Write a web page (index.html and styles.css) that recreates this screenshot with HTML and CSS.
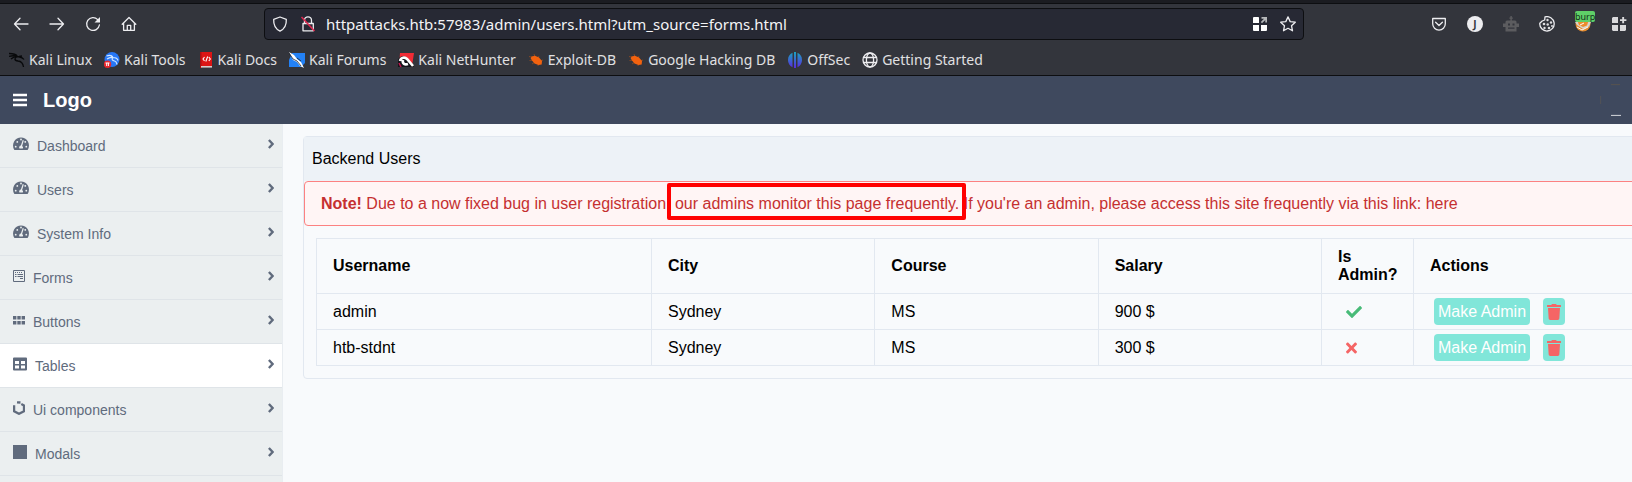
FILE: index.html
```html
<!DOCTYPE html>
<html lang="en">
<head>
<meta charset="utf-8">
<title>Backend Users</title>
<link rel="stylesheet" href="styles.css">
</head>
<body>
<svg class="sprite" aria-hidden="true">
  <symbol id="gauge" viewBox="0 0 16 14">
    <path fill="currentColor" fill-rule="evenodd" d="M8 .5a8 8 0 0 0-6.900 12c.2.4.5.5.8.5h12.200c.3 0 .6-.1.8-.5A8 8 0 0 0 8 .5zM8 1.600a.9.9 0 1 1 0 1.800.9.9 0 0 1 0-1.800zM2.700 10.600a.9.9 0 1 1 0-1.800.9.9 0 0 1 0 1.800zM4.300 5.800a.9.9 0 1 1 0-1.800.9.9 0 0 1 0 1.800zM9.700 11.600H6.500a1.900 1.900 0 0 1 1.400-3L9.700 3.100l1.100.4-1.700 5.500a1.900 1.900 0 0 1 .6 2.600zM11.900 5.700a.9.9 0 0 1 .1-1.700.9.9 0 1 1-.1 1.700zM13.300 10.600a.9.9 0 1 1 0-1.800.9.9 0 0 1 0 1.800z"/>
  </symbol>
  <symbol id="chevron" viewBox="0 0 6 10">
    <path fill="none" stroke="currentColor" stroke-width="2.400" d="M.9 1 4.600 5 .9 9"/>
  </symbol>
  <symbol id="trash" viewBox="0 0 448 512">
    <path fill="currentColor" d="M432 32H312l-9.400-18.700A24 24 0 0 0 281.100 0H166.800a23.720 23.720 0 0 0-21.400 13.300L136 32H16A16 16 0 0 0 0 48v32a16 16 0 0 0 16 16h416a16 16 0 0 0 16-16V48a16 16 0 0 0-16-16zM53.200 467a48 48 0 0 0 47.900 45h245.800a48 48 0 0 0 47.900-45L416 128H32z"/>
  </symbol>
  <symbol id="bug" viewBox="0 0 16 16">
    <path fill="none" stroke="#8a4a24" stroke-width=".9" d="M1 4.500l4 1M1.500 8.500l4-.5M4 12l3-2M6 2l1 3M11 4l-1 2M15 8l-3 1M10 14l.5-3"/>
    <path fill="#f2620f" d="M3.500 4.500 7 3.800l4 1.800 3 3.400-.3 3.500-3.200.5-4-1.500L4 8.500 2.800 6.500z"/>
  </symbol>
</svg>

<div class="browser">
  <div class="tabstrip"></div>
  <div class="toolbar">
    <button class="tool" aria-label="Back"><svg viewBox="0 0 16 16"><path class="line" d="M15 8H1.500M7 2.300 1.500 8 7 13.700"/></svg></button>
    <button class="tool" aria-label="Forward"><svg viewBox="0 0 16 16"><path class="line" d="M1 8h13.500M9 2.300 14.500 8 9 13.700"/></svg></button>
    <button class="tool" aria-label="Reload"><svg viewBox="0 0 16 16"><path class="line" d="M12.700 3.600A6.400 6.400 0 1 0 14.400 9"/><path class="solid" d="M15 1v5.500H9.500z"/></svg></button>
    <button class="tool" aria-label="Home"><svg viewBox="0 0 16 16"><path class="line" d="M1.200 8.200 8 1.500l6.800 6.700M2.600 7v7.300h10.800V7M6.300 14V9.300h3.400V14"/></svg></button>
    <div class="spring"></div>
    <div class="urlbar">
      <svg class="icon16" viewBox="0 0 16 16"><path class="line" d="M8 1 14.300 3.400c.3 5.400-1.700 9.600-6.300 11.700C3.400 13 1.400 8.800 1.700 3.400z"/></svg>
      <svg class="icon16 lock" viewBox="0 0 16 16"><path class="line" d="M4.500 7.500V4.300a3.500 3.500 0 0 1 7 0v3.200M3 7.500h10.300v7.300H3z"/><path stroke="#e22850" stroke-width="1.500" d="M1.500 1 14.500 15"/></svg>
      <input class="url" type="text" aria-label="Address" value="httpattacks.htb:57983/admin/users.html?utm_source=forms.html">
      <button class="tool" aria-label="Containers"><svg viewBox="0 0 16 16"><path fill="#fff" d="M2 1h4.500a1 1 0 0 1 .5 1v5H1V2a1 1 0 0 1 1-1zM1 9h6v6H2a1 1 0 0 1-1-1zM9 9h6v5a1 1 0 0 1-1 1H9z"/><path fill="#b5b7b9" d="M9.500 1H15v5.500h-1.700V4L10 7.200 8.800 6 12 2.700H9.500z"/></svg></button>
      <button class="tool star" aria-label="Bookmark"><svg viewBox="0 0 16 16"><path class="line" d="M8 .9l2.200 4.700 5.100.6-3.800 3.500 1 5.100L8 12.300l-4.500 2.500 1-5.100L.7 6.200l5.100-.6z"/></svg></button>
    </div>
    <div class="spring"></div>
    <button class="tool" aria-label="Pocket"><svg viewBox="0 0 16 16"><path class="line" d="M1.700 2.500h12.600v5.300a6.300 6.300 0 0 1-12.600 0zM4.600 6.200 8 9.500l3.400-3.300"/></svg></button>
    <button class="tool" aria-label="Account"><svg viewBox="0 0 16 16"><circle class="solid" cx="8" cy="8" r="8"/><text class="letter" x="8" y="12">J</text></svg></button>
    <button class="tool" aria-label="Robot"><svg viewBox="0 0 16 16"><path fill="#5c5c5f" fill-rule="evenodd" d="M7.400 0h1.400v1.500h1v1.200h-1V4.500H12a1.500 1.500 0 0 1 1.500 1.500v1.500H16v3.500h-2.500v4.500h-11V11H0V7.500h2.500V6A1.500 1.500 0 0 1 4 4.500h3.400V2.700h-1V1.500h1zM5 7.500v2h2v-2zm4.500 0v2h2v-2zM5 11.500v1.200h6.500v-1.200z"/></svg></button>
    <button class="tool" aria-label="Cookies"><svg viewBox="0 0 16 16"><path class="line" d="M6 .9 5.700 4 3.200 5 .8 7.200A7.200 7.200 0 1 0 6 .9z"/><g fill="#dedee0"><circle cx="8.500" cy="4" r="1.200"/><circle cx="12" cy="6.500" r="1.200"/><circle cx="5" cy="8" r="1.300"/><circle cx="8.700" cy="8.500" r="1.200"/><circle cx="5.500" cy="12" r="1.200"/><circle cx="10" cy="12" r="1.300"/><circle cx="13" cy="10" r="1"/></g></svg></button>
    <button class="tool" aria-label="Proxy"><svg viewBox="0 0 16 16"><circle cx="8" cy="8" r="7.500" fill="#e58a2c"/><path fill="#d8d3cb" d="M0 6h16l-2 4.500L8 13 2 9z"/><path fill="#ee8b2b" d="M2.500 5h11L12 9.500 8 11 4 9z"/><path stroke="#fff" d="M5 9l4-2M2 11l5 3 6-3" fill="none"/></svg><span class="badge">burp</span></button>
    <button class="tool" aria-label="Extensions"><svg viewBox="0 0 16 16"><path fill="#dadadc" d="M2 1h5v6H1V2zM1 9h6v6H2l-1-1zM9 9h6v5l-1 1H9zM11.200 1h1.900v2.200h2.300V5h-2.300v2.200h-1.900V5H9V3.200h2.200z"/></svg></button>
  </div>
  <nav class="bookmarks" aria-label="Bookmarks">
    <a href="#"><svg class="icon16" viewBox="0 0 16 16"><path fill="none" stroke="#08090b" stroke-width="1.300" d="M0 1.500c4 0 7 .5 8.500 3M0 4.500c3-1 6-1 8.500 0M2 7c2-2 5-2.500 6.500-2.500 2 .5 5 .5 6.500 3M8.500 4.500C5 6 5 8.500 9 9c3 .3 5 2 5.500 6M10 4.500l3-.5"/></svg>Kali Linux</a>
    <a href="#"><svg class="icon16" viewBox="0 0 16 16"><circle cx="8" cy="7.500" r="7.500" fill="#2777f5"/><path fill="none" stroke="#cfe5ff" stroke-width="1.200" d="M2.500 4c3-1 5.500-.5 6.500 1.500 3 0 4.500.8 5 3M3 7c2-1.500 4-2 6-1.500-2 1.500-.5 3 1.500 3.500s2 1.500 2.500 3.500"/><circle cx="3.500" cy="12.200" r="3.700" fill="#e8262c"/><path stroke="#fff" d="M1.500 11h4M2.700 11v3M4.400 11v3"/></svg>Kali Tools</a>
    <a href="#"><svg class="icon16" viewBox="0 0 16 16"><path fill="#a90f12" d="M2 0h2v16H2z"/><path fill="#dc1414" d="M3.500 0H14v14H3.500z"/><path fill="#d7c9c9" d="M3 14h11v1.600H3z"/><path fill="none" stroke="#fff" stroke-width="1.100" d="M6.500 5 5 7l1.500 2M9.700 4.500 7.800 9.500M10.800 5l1.500 2-1.500 2"/></svg>Kali Docs</a>
    <a href="#"><svg class="icon16" viewBox="0 0 16 16"><path fill="#2381f5" d="M3 1h13v10l-4 4H0V8z"/><path fill="#fff" d="M0 0l5 3 3 4 4 3 3 6-4-2-3-4-4-2-2-4z"/><path stroke="#20232a" stroke-width=".8" fill="none" d="M0 1l4 6 4 2 4 5M8 6l4 3"/></svg>Kali Forums</a>
    <a href="#"><svg class="icon16" viewBox="0 0 16 16"><path fill="#f22b35" d="M2 1h14l-2 13-5-3-8 4z"/><path fill="#15151a" d="M0 8c1-4 6-5 9-2l7 9H0z"/><path fill="none" stroke="#fff" stroke-width="2.600" d="M2 9c1-4 5-4 7-2l6 7M5 8c-1 4 2 5 5 4"/><path stroke="#c5164e" stroke-width="1.600" d="M1 11l2 4"/></svg>Kali NetHunter</a>
    <a href="#"><svg class="icon16"><use href="#bug"/></svg>Exploit-DB</a>
    <a href="#"><svg class="icon16"><use href="#bug"/></svg>Google Hacking DB</a>
    <a href="#"><svg class="icon16" viewBox="0 0 16 16"><defs><linearGradient id="offsec" gradientUnits="userSpaceOnUse" x1="0" y1="0" x2="0" y2="16"><stop stop-color="#1aa3bd"/><stop offset="1" stop-color="#5a2be0"/></linearGradient></defs><path fill="url(#offsec)" d="M5.500.8v14.400A8 8 0 0 1 5.500.8zM10.500.8v14.400a8 8 0 0 0 0-14.400zM7 0h2v16H7z"/></svg>OffSec</a>
    <a href="#"><svg class="icon16" viewBox="0 0 16 16"><g class="line"><circle cx="8" cy="8" r="7"/><ellipse cx="8" cy="8" rx="3.600" ry="7"/><path d="M1.500 5.500h13M1.500 10.500h13"/></g></svg>Getting Started</a>
  </nav>
</div>

<header class="header">
  <button class="menu" aria-label="Toggle menu"><svg viewBox="0 0 14 14"><path stroke="#fff" stroke-width="2.400" d="M0 2h14M0 7h14M0 12h14"/></svg></button>
  <h1 class="logo">Logo</h1>
  <svg class="avatar" viewBox="0 0 32 32"><path d="M11 .6h9" stroke="#57524f"/><path d="M.6 12v8" stroke="#525256"/><path d="M11 31.400h10" stroke="#d5d8dc"/></svg>
</header>

<div class="page">
  <nav class="sidebar" aria-label="Main">
    <ul>
      <li><a href="#"><svg class="w16"><use href="#gauge"/></svg><span>Dashboard</span><svg class="chev"><use href="#chevron"/></svg></a></li>
      <li><a href="#"><svg class="w16"><use href="#gauge"/></svg><span>Users</span><svg class="chev"><use href="#chevron"/></svg></a></li>
      <li><a href="#"><svg class="w16"><use href="#gauge"/></svg><span>System Info</span><svg class="chev"><use href="#chevron"/></svg></a></li>
      <li><a href="#"><svg class="w12" viewBox="0 0 12 14"><path fill="none" stroke="currentColor" d="M.5 1.500h11v11H.5zM2 3.500h1M4 3.500h1M6 3.500h1M8 3.500h1M2 5.500h1.500M4.500 5.500H10M2 7.500h1.500M4.500 7.500H10M7 9.500h3"/></svg><span>Forms</span><svg class="chev"><use href="#chevron"/></svg></a></li>
      <li><a href="#"><svg class="w12" viewBox="0 0 12 14"><path fill="currentColor" d="M0 3h3.400v3.500H0zM4.300 3h3.400v3.500H4.300zM8.600 3H12v3.500H8.600zM0 8h3.400v3.500H0zM4.300 8h3.400v3.500H4.300zM8.600 8H12v3.500H8.600z"/></svg><span>Buttons</span><svg class="chev"><use href="#chevron"/></svg></a></li>
      <li class="active"><a href="#"><svg class="w14" viewBox="0 0 14 14"><path fill="currentColor" fill-rule="evenodd" d="M1 .5h12a1 1 0 0 1 1 1v11a1 1 0 0 1-1 1H1a1 1 0 0 1-1-1v-11a1 1 0 0 1 1-1zM2 4v3h4V4zm6 0v3h4V4zM2 8.500v3h4v-3zm6 0v3h4v-3z"/></svg><span>Tables</span><svg class="chev"><use href="#chevron"/></svg></a></li>
      <li><a href="#"><svg class="w12" viewBox="0 0 12 14"><path fill="none" stroke="currentColor" stroke-width="2.300" d="M1.100 4.200v6L6 12.800l5-2.600V4.500L8.300 3M4 1.300 7.500 1.500"/></svg><span>Ui components</span><svg class="chev"><use href="#chevron"/></svg></a></li>
      <li><a href="#"><svg class="w14" viewBox="0 0 14 14"><path fill="currentColor" d="M0 0h14v14H0z"/></svg><span>Modals</span><svg class="chev"><use href="#chevron"/></svg></a></li>
    </ul>
  </nav>

  <main class="main">
    <section class="panel">
      <h2 class="panel-title">Backend Users</h2>
      <div class="alert" role="alert"><strong>Note!</strong> Due to a now fixed bug in user registration, <mark class="callout">our admins monitor this page frequently.</mark> If you're an admin, please access this site frequently via this link: <a href="#">here</a></div>
      <div class="table-wrap">
        <table>
          <thead>
            <tr><th class="c-name">Username</th><th class="c-mid">City</th><th class="c-mid">Course</th><th class="c-mid">Salary</th><th class="c-flag">Is Admin?</th><th>Actions</th></tr>
          </thead>
          <tbody>
            <tr><td>admin</td><td>Sydney</td><td>MS</td><td>900 $</td>
              <td><svg class="yes" role="img" aria-label="Yes" viewBox="0 0 512 512"><path fill="currentColor" d="M173.898 439.404l-166.400-166.400c-9.997-9.997-9.997-26.206 0-36.204l36.203-36.204c9.997-9.998 26.207-9.998 36.204 0L192 312.690 432.095 72.596c9.997-9.997 26.207-9.997 36.204 0l36.203 36.204c9.997 9.997 9.997 26.206 0 36.204l-294.400 294.401c-9.998 9.997-26.207 9.997-36.204-.001z"/></svg></td>
              <td><div class="actions"><button class="btn">Make Admin</button><button class="btn danger" aria-label="Delete admin"><svg><use href="#trash"/></svg></button></div></td></tr>
            <tr><td>htb-stdnt</td><td>Sydney</td><td>MS</td><td>300 $</td>
              <td><svg class="no" role="img" aria-label="No" viewBox="0 0 352 512"><path fill="currentColor" d="M242.720 256l100.070-100.070c12.280-12.280 12.280-32.190 0-44.480l-22.240-22.240c-12.280-12.280-32.190-12.280-44.480 0L176 189.280 75.930 89.210c-12.280-12.280-32.190-12.280-44.480 0L9.210 111.450c-12.280 12.280-12.280 32.190 0 44.480L109.280 256 9.210 356.070c-12.280 12.280-12.280 32.190 0 44.480l22.240 22.240c12.280 12.280 32.200 12.280 44.480 0L176 322.720l100.070 100.070c12.280 12.280 32.200 12.280 44.480 0l22.240-22.240c12.280-12.280 12.280-32.190 0-44.480L242.720 256z"/></svg></td>
              <td><div class="actions"><button class="btn">Make Admin</button><button class="btn danger" aria-label="Delete htb-stdnt"><svg><use href="#trash"/></svg></button></div></td></tr>
          </tbody>
        </table>
      </div>
    </section>
  </main>
</div>
</body>
</html>
```

FILE: styles.css
```css
* { box-sizing: border-box; }

body {
  margin: 0;
  min-height: 100vh;
  display: flex;
  flex-direction: column;
  overflow: hidden;
  background: #f8fafc;
  color: #000;
  font: 16px/18px "Liberation Sans", Arial, sans-serif;
}

a { color: inherit; text-decoration: none; }
button { border: 0; padding: 0; background: none; color: inherit; font: inherit; }
svg { display: block; flex: none; }
.sprite { position: absolute; width: 0; height: 0; }

.line { fill: none; stroke: #ededf0; stroke-width: 1.3; stroke-linejoin: round; stroke-linecap: round; }
.solid { fill: #ededf0; }
.icon16 { width: 16px; height: 16px; }

/* Browser chrome */
.browser {
  background: #33353c;
  color: #e0e0e2;
  border-bottom: 1px solid #0d0e11;
  font-family: "Noto Sans", sans-serif;
}
.tabstrip { height: 4px; background: #1b1c21; border-bottom: 1px solid #0d0e11; }
.toolbar { display: flex; align-items: center; gap: 20px; padding: 4px 5px 4px 13px; }
.tool { width: 16px; height: 16px; flex: none; position: relative; }
.tool svg { width: 16px; height: 16px; }
.spring { flex: 0 1 87px; }
.urlbar {
  flex: 1;
  display: flex;
  align-items: center;
  height: 32px;
  padding: 0 7px;
  background: #272934;
  border: 1px solid #0d0e11;
  border-radius: 4px;
}
.lock { margin: 0 10px 0 12px; }
.url {
  flex: 1;
  min-width: 0;
  border: 0;
  padding: 0;
  background: none;
  color: #f4f4f6;
  font: 15px/20px "Noto Sans", sans-serif;
  outline: 0;
}
.star { margin-left: 12px; }
.letter { font: bold 10px "Noto Sans", sans-serif; fill: #33353c; text-anchor: middle; }
.badge {
  position: absolute;
  left: 0;
  top: -5px;
  min-width: 20px;
  height: 11px;
  border-radius: 2px;
  background: #5fd068;
  color: #14301a;
  font-size: 9px;
  line-height: 11px;
}
.bookmarks { display: flex; gap: 12px; padding: 6px 9px 5px; }
.bookmarks a { display: flex; align-items: center; gap: 4px; font-size: 14px; line-height: 20px; white-space: nowrap; }

/* Application header */
.header {
  display: flex;
  align-items: center;
  height: 48px;
  padding: 0 0 0 13px;
  background: #3f495e;
  color: #fff;
}
.menu svg { width: 14px; height: 14px; }
.logo { margin: 0 auto 0 16px; font-size: 20px; line-height: 24px; }
.avatar { width: 32px; height: 32px; fill: none; }

/* Sidebar and main area */
.page { flex: 1; display: flex; }
.sidebar {
  flex: none;
  width: 283px;
  background: #ebeff0;
  border-right: 1px solid #e9edf1;
  color: #606b7d;
  font-size: 14px;
  line-height: 20px;
}
.sidebar ul { margin: 0; padding: 0; list-style: none; }
.sidebar li { border-bottom: 1px solid #dfe4e8; }
.sidebar .active { background: #fff; }
.sidebar a { display: flex; gap: 8px; padding: 12px 8px 11px 13px; }
.sidebar a svg { height: 14px; margin-top: 1px; }
.w16 { width: 16px; }
.w14 { width: 14px; }
.w12 { width: 12px; }
.sidebar a .chev { width: 6px; height: 10px; margin: 3px 0 0 auto; }

.main { flex: 1; min-width: 0; padding: 12px 0 12px 20px; }
/* The panel runs past the right edge of the window. */
.panel { margin-right: -38px; border: 1px solid #e2e8f0; border-radius: 4px; }
.panel-title { margin: 0; padding: 13px 8px; background: #edf2f7; font-size: 16px; font-weight: 400; line-height: 18px; }
.alert {
  padding: 13px 16px 12px;
  border: 1px solid #fc8181;
  border-radius: 4px;
  background: #fff5f5;
  color: #c53030;
  white-space: nowrap;
}
.callout { position: relative; background: none; color: inherit; }
.callout::after {
  content: "";
  position: absolute;
  inset: -12px -7px -8px -8px;
  border: 4px solid #f00;
  border-radius: 2px;
}

.table-wrap { padding: 12px; }
table {
  width: 100%;
  table-layout: fixed;
  border-collapse: collapse;
}
th, td { border: 1px solid #e2e8f0; padding: 0 16px; text-align: left; }
th { height: 55px; }
td { height: 36px; }
.c-name { width: 25%; }
.c-mid { width: 16.667%; }
.c-flag { width: 92px; }
.yes { width: 16px; height: 16px; margin-left: 8px; color: #48bb78; }
.no { width: 11px; height: 16px; margin-left: 8px; color: #f56565; }
.actions { display: flex; gap: 13px; padding-left: 4px; }
.btn { height: 27px; padding: 0 4px; border-radius: 4px; background: #81e6d9; color: #fff; }
.danger { color: #f56565; }
.danger svg { width: 14px; height: 16px; }
```
